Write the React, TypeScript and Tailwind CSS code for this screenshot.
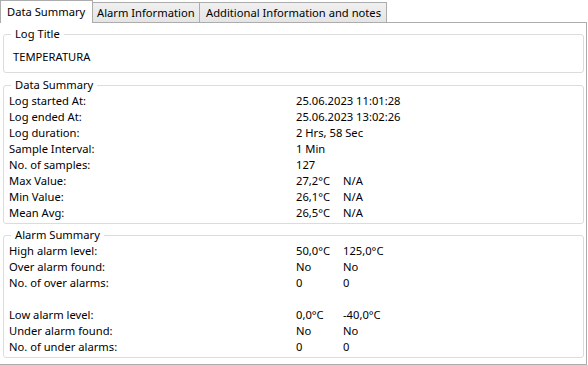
import React from 'react';

const font = { fontFamily: '"Noto Sans", "Open Sans", sans-serif' };

type Row = { label: string; a?: string; b?: string };

const dataRows: Row[] = [
  { label: 'Log started At:', a: '25.06.2023 11:01:28' },
  { label: 'Log ended At:', a: '25.06.2023 13:02:26' },
  { label: 'Log duration:', a: '2 Hrs, 58 Sec' },
  { label: 'Sample Interval:', a: '1 Min' },
  { label: 'No. of samples:', a: '127' },
  { label: 'Max Value:', a: '27,2°C', b: 'N/A' },
  { label: 'Min Value:', a: '26,1°C', b: 'N/A' },
  { label: 'Mean Avg:', a: '26,5°C', b: 'N/A' },
];

const alarmRows: Row[] = [
  { label: 'High alarm level:', a: '50,0°C', b: '125,0°C' },
  { label: 'Over alarm found:', a: 'No', b: 'No' },
  { label: 'No. of over alarms:', a: '0', b: '0' },
  { label: '' },
  { label: 'Low alarm level:', a: '0,0°C', b: '-40,0°C' },
  { label: 'Under alarm found:', a: 'No', b: 'No' },
  { label: 'No. of under alarms:', a: '0', b: '0' },
];

const Group: React.FC<{ title: string; className?: string; children: React.ReactNode }> = ({ title, className, children }) => (
  <fieldset className={`border border-[#dcdcdc] rounded-[3px] ml-[3px] mr-[2px] px-[4px] ${className ?? ''}`}>
    <legend className="ml-[3px] px-[4px] leading-[16px]">{title}</legend>
    {children}
  </fieldset>
);

const Rows: React.FC<{ rows: Row[] }> = ({ rows }) => (
  <div className="pb-[2px]">
    {rows.map((r, i) => (
      <div key={i} className="flex h-[16px] leading-[16px] whitespace-nowrap">
        <span className="w-[288px] pl-[1px]">{r.label}</span>
        <span className="w-[47px]">{r.a}</span>
        <span>{r.b}</span>
      </div>
    ))}
  </div>
);

export default function App() {
  return (
    <div className="w-[588px] h-[365px] bg-white text-black text-[11.2px] overflow-hidden" style={font}>
      <div className="flex h-[22px] items-end relative z-10">
        <div className="h-[23px] w-[93px] bg-white border border-b-0 border-[#acacac] pl-[6px] leading-[22px] self-start whitespace-nowrap">
          Data Summary
        </div>
        <div className="h-[20px] w-[108px] -ml-px bg-gradient-to-b from-[#f0f0f0] to-[#e5e5e5] border border-b-0 border-[#acacac] pl-[4px] leading-[19px] whitespace-nowrap">
          Alarm Information
        </div>
        <div className="h-[20px] w-[188px] -ml-px bg-gradient-to-b from-[#f0f0f0] to-[#e5e5e5] border border-b-0 border-[#acacac] pl-[6px] leading-[19px] whitespace-nowrap">
          Additional Information and notes
        </div>
      </div>
      <div className="w-[587px] h-[343px] border border-[#acacac] border-l-0 pt-[3px]">
        <Group title="Log Title">
          <div className="leading-[16px] pt-[7px] pb-[7px] pl-[5px]">TEMPERATURA</div>
        </Group>
        <Group title="Data Summary" className="mt-[4px]">
          <Rows rows={dataRows} />
        </Group>
        <Group title="Alarm Summary" className="mt-[3px]">
          <Rows rows={alarmRows} />
        </Group>
      </div>
    </div>
  );
}
